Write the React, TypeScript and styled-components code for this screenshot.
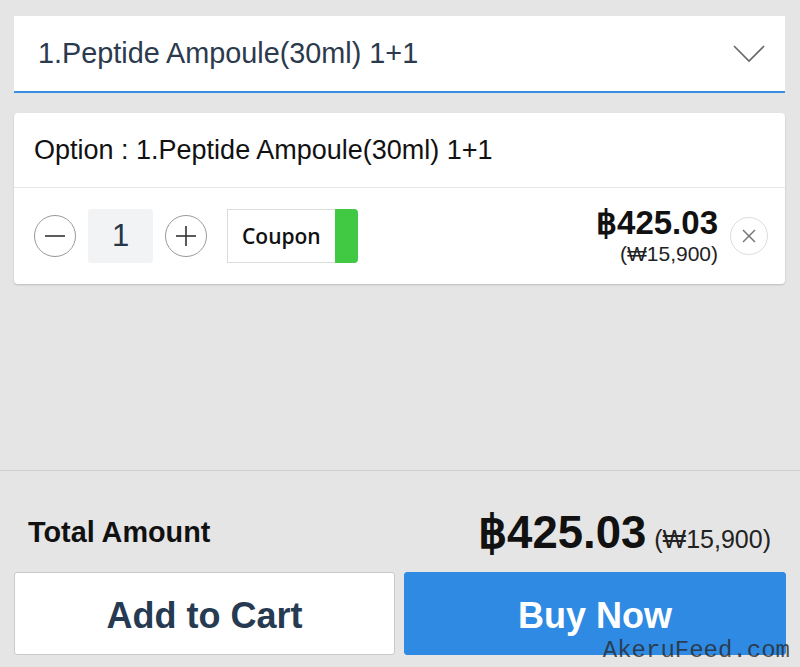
import React from "react";
import styled, { createGlobalStyle } from "styled-components";

const GlobalStyle = createGlobalStyle`
  html, body { margin: 0; padding: 0; background: #e5e5e5; }
  * { box-sizing: border-box; }
`;

const Page = styled.div`
  position: relative;
  width: 800px;
  height: 667px;
  display: flex;
  flex-direction: column;
  background: #e5e5e5;
  font-family: "Liberation Sans", Arial, sans-serif;
  overflow: hidden;
`;

const Upper = styled.div`
  flex: 1;
  padding: 16px 15px 0 14px;
  display: flex;
  flex-direction: column;
  gap: 20px;
`;

const Select = styled.div`
  height: 77px;
  background: #fff;
  border-bottom: 2px solid #3a8ee2;
  display: flex;
  align-items: center;
  justify-content: space-between;
  padding: 0 20px 0 24px;
  color: #2b3a4c;
  font-size: 28.8px;
`;

const Card = styled.div`
  background: #fff;
  border-radius: 4px;
  box-shadow: 0 1px 2px rgba(0, 0, 0, 0.18);
`;

const CardHeader = styled.div`
  height: 75px;
  display: flex;
  align-items: center;
  padding: 0 20px;
  font-size: 27px;
  color: #111;
  border-bottom: 1px solid #e6e6e6;
`;

const CardRow = styled.div`
  height: 96px;
  display: flex;
  align-items: center;
  padding: 0 17px 0 20px;
`;

const RoundButton = styled.button<{ $size: number; $border: string }>`
  width: ${(p) => p.$size}px;
  height: ${(p) => p.$size}px;
  border-radius: 50%;
  border: 1px solid ${(p) => p.$border};
  background: #fff;
  padding: 0;
  display: flex;
  align-items: center;
  justify-content: center;
  flex-shrink: 0;
`;

const Qty = styled.div`
  width: 65px;
  height: 54px;
  margin: 0 12px;
  background: #f2f3f5;
  border-radius: 3px;
  display: flex;
  align-items: center;
  justify-content: center;
  font-size: 31px;
  color: #26364a;
`;

const Coupon = styled.div`
  margin-left: 20px;
  height: 54px;
  display: flex;
  align-items: stretch;
`;

const CouponLabel = styled.div`
  width: 108px;
  border: 1px solid #dcdcdc;
  border-right: none;
  display: flex;
  align-items: center;
  padding-left: 14px;
  font-family: "Open Sans", "Noto Sans", sans-serif;
  font-weight: 600;
  font-size: 21px;
  color: #111;
`;

const CouponTab = styled.div`
  width: 23px;
  background: #41c944;
  border-radius: 0 4px 4px 0;
`;

const Spacer = styled.div`
  flex: 1;
`;

const PriceBlock = styled.div`
  display: flex;
  flex-direction: column;
  align-items: flex-end;
  gap: 3px;
  margin-right: 12px;
`;

const Price = styled.div<{ $size: number }>`
  font-weight: 700;
  font-size: ${(p) => p.$size}px;
  color: #111;
  line-height: 1;
`;

const Sub = styled.div<{ $size: number }>`
  font-size: ${(p) => p.$size}px;
  color: #222;
  line-height: 1.1;
`;

const Footer = styled.div`
  height: 197px;
  border-top: 1px solid #cfcfcf;
  padding: 0 14px 12px;
  display: flex;
  flex-direction: column;
`;

const TotalRow = styled.div`
  flex: 1;
  display: flex;
  align-items: center;
  justify-content: space-between;
  padding: 22px 15px 0 14px;
`;

const TotalLabel = styled.div`
  font-weight: 700;
  font-size: 28.8px;
  color: #111;
`;

const TotalPrice = styled.div`
  display: flex;
  align-items: baseline;
  gap: 8px;
`;

const Buttons = styled.div`
  display: grid;
  grid-template-columns: 381px 382px;
  gap: 9px;
  height: 83px;
`;

const ActionButton = styled.button<{ $primary?: boolean }>`
  border-radius: 3px;
  border: 1px solid ${(p) => (p.$primary ? "#2e8ae3" : "#c9c9c9")};
  background: ${(p) => (p.$primary ? "#2e8ae3" : "#fff")};
  color: ${(p) => (p.$primary ? "#fff" : "#263a52")};
  font-family: "Liberation Sans", Arial, sans-serif;
  font-weight: 700;
  font-size: 36px;
  padding: 4px 0 0;
`;

const Watermark = styled.div`
  position: absolute;
  right: 10px;
  bottom: 3px;
  font-family: "Liberation Mono", "Courier New", monospace;
  font-size: 24px;
  color: rgba(40, 40, 40, 0.8);
  pointer-events: none;
`;

export default function App() {
  return (
    <>
      <GlobalStyle />
      <Page>
        <Upper>
          <Select>
            <span>1.Peptide Ampoule(30ml) 1+1</span>
            <svg width="32" height="20" viewBox="0 0 32 20">
              <polyline points="1,2 16,17 31,2" fill="none" stroke="#666" strokeWidth="1.6" />
            </svg>
          </Select>
          <Card>
            <CardHeader>Option : 1.Peptide Ampoule(30ml) 1+1</CardHeader>
            <CardRow>
              <RoundButton $size={42} $border="#9a9a9a" aria-label="decrease">
                <svg width="22" height="22" viewBox="0 0 22 22">
                  <line x1="1" y1="11" x2="21" y2="11" stroke="#333" strokeWidth="1.6" />
                </svg>
              </RoundButton>
              <Qty>1</Qty>
              <RoundButton $size={42} $border="#9a9a9a" aria-label="increase">
                <svg width="22" height="22" viewBox="0 0 22 22">
                  <line x1="1" y1="11" x2="21" y2="11" stroke="#333" strokeWidth="1.6" />
                  <line x1="11" y1="1" x2="11" y2="21" stroke="#333" strokeWidth="1.6" />
                </svg>
              </RoundButton>
              <Coupon>
                <CouponLabel>Coupon</CouponLabel>
                <CouponTab />
              </Coupon>
              <Spacer />
              <PriceBlock>
                <Price $size={33}>฿425.03</Price>
                <Sub $size={21}>(₩15,900)</Sub>
              </PriceBlock>
              <RoundButton $size={38} $border="#dddddd" aria-label="remove">
                <svg width="16" height="16" viewBox="0 0 16 16">
                  <line x1="2" y1="2" x2="14" y2="14" stroke="#777" strokeWidth="1.5" />
                  <line x1="14" y1="2" x2="2" y2="14" stroke="#777" strokeWidth="1.5" />
                </svg>
              </RoundButton>
            </CardRow>
          </Card>
        </Upper>
        <Footer>
          <TotalRow>
            <TotalLabel>Total Amount</TotalLabel>
            <TotalPrice>
              <Price $size={45.5}>฿425.03</Price>
              <Sub $size={25}>(₩15,900)</Sub>
            </TotalPrice>
          </TotalRow>
          <Buttons>
            <ActionButton>Add to Cart</ActionButton>
            <ActionButton $primary>Buy Now</ActionButton>
          </Buttons>
        </Footer>
        <Watermark>AkeruFeed.com</Watermark>
      </Page>
    </>
  );
}
